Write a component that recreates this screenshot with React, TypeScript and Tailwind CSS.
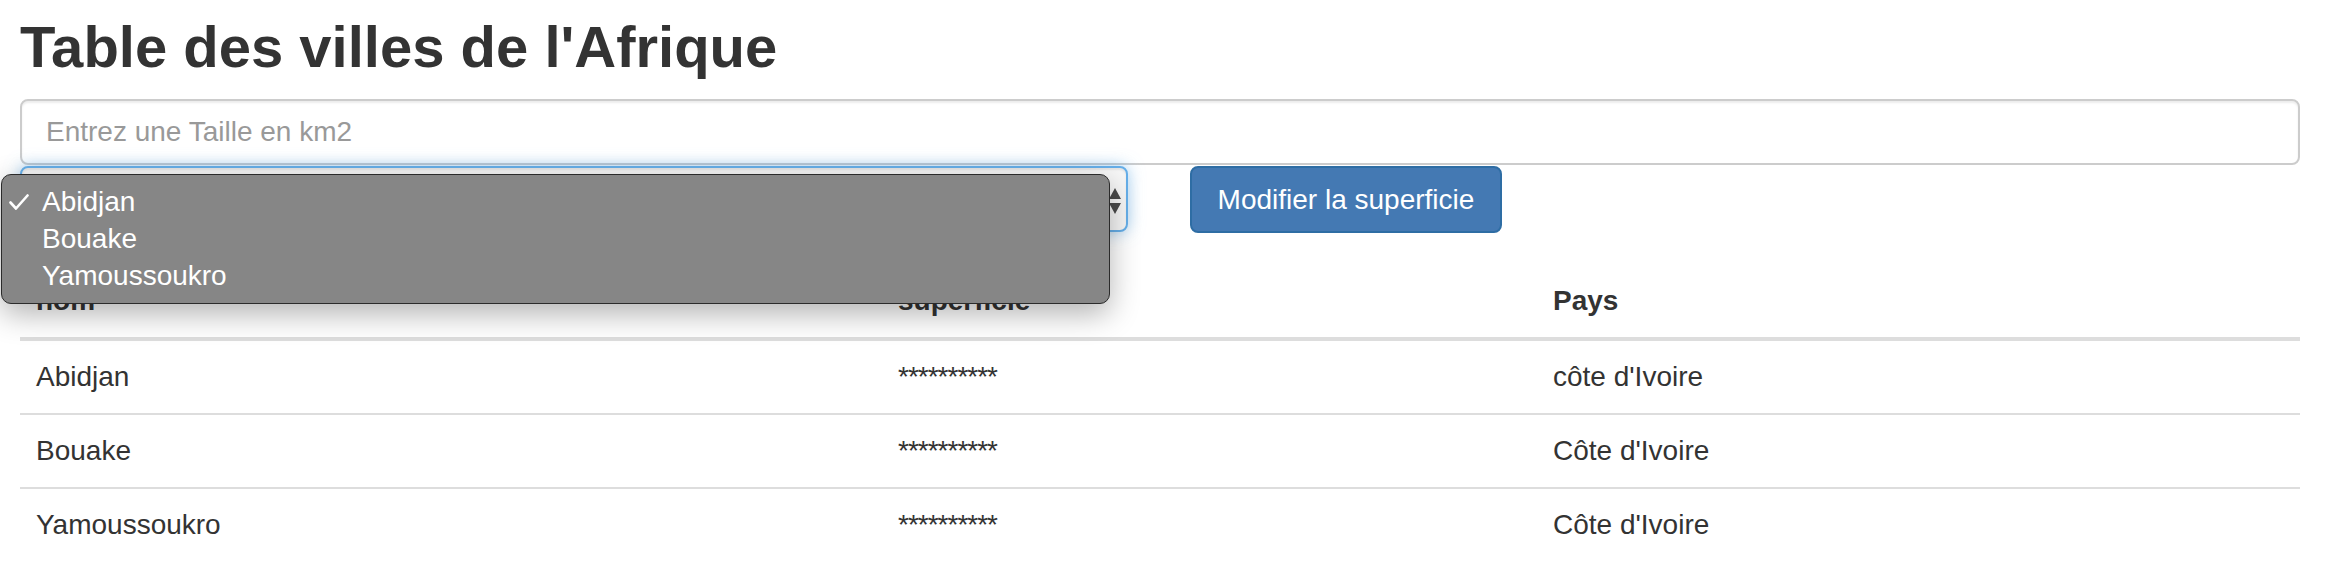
import React from "react";

const villes = [
  { nom: "Abidjan", superficie: "**********", pays: "côte d'Ivoire" },
  { nom: "Bouake", superficie: "**********", pays: "Côte d'Ivoire" },
  { nom: "Yamoussoukro", superficie: "**********", pays: "Côte d'Ivoire" },
];

const CheckMark = () => (
  <svg width="20" height="16" viewBox="0 0 20 16" className="absolute left-[7px] top-[19px]">
    <path d="M1.5 8.5 L7 14.5 L18.5 1.5" fill="none" stroke="white" strokeWidth="2.6" strokeLinecap="round" strokeLinejoin="round" />
  </svg>
);

const App = () => {
  return (
    <div className="min-h-[588px] bg-white px-[20px] pr-[40px] font-['Liberation_Sans',Arial,sans-serif] text-[#333]">
      <h1 className="mt-[18px] text-[58px] font-bold leading-[58px]">Table des villes de l'Afrique</h1>

      <input
        type="text"
        placeholder="Entrez une Taille en km2"
        className="mt-[23px] block h-[66px] w-full rounded-[8px] border-2 border-[#ccc] bg-white px-[24px] text-[28px] shadow-[inset_0_2px_2px_rgba(0,0,0,0.075)] outline-none placeholder:text-[#999]"
      />

      {/* select + bouton, avec le menu natif ouvert par-dessus */}
      <div className="relative mt-[1px] flex items-start">
        <div className="relative h-[66px] w-[1108px] rounded-[8px] border-2 border-[#66afe9] bg-[#f7f7f7] shadow-[inset_0_2px_2px_rgba(0,0,0,0.075),0_0_16px_rgba(102,175,233,0.6)]">
          <svg width="14" height="28" viewBox="0 0 14 28" className="absolute right-[4px] top-[19px]">
            <path d="M1 12 L7 1 L13 12 Z" fill="#4a4a4a" />
            <path d="M1 16 L7 27 L13 16 Z" fill="#4a4a4a" />
          </svg>
        </div>
        <button className="ml-[62px] h-[67px] w-[312px] rounded-[8px] border-2 border-[#2e6da4] bg-[#4479b3] text-[28px] text-white">
          Modifier la superficie
        </button>

        <div className="absolute left-[-19px] top-[8px] z-10 h-[130px] w-[1109px] rounded-[10px] border border-[#2b2b2b] bg-[#868686] pt-[8px] pl-[40px] text-[28px] leading-[37px] text-white shadow-[0_10px_30px_rgba(0,0,0,0.3)]">
          <CheckMark />
          <div>Abidjan</div>
          <div>Bouake</div>
          <div>Yamoussoukro</div>
        </div>
      </div>

      <table className="mt-[32px] w-full border-collapse text-left text-[28px] leading-[40px]">
        <thead>
          <tr className="border-b-4 border-[#ddd]">
            <th className="w-[862px] p-[16px] font-bold">nom</th>
            <th className="w-[655px] p-[16px] font-bold">superficie</th>
            <th className="p-[16px] font-bold">Pays</th>
          </tr>
        </thead>
        <tbody>
          {villes.map((v, i) => (
            <tr key={v.nom} className={i === 0 ? "" : "border-t-2 border-[#ddd]"}>
              <td className="p-[16px]">{v.nom}</td>
              <td className="p-[16px] tracking-[-1px]">{v.superficie}</td>
              <td className="p-[16px]">{v.pays}</td>
            </tr>
          ))}
        </tbody>
      </table>
    </div>
  );
};

export default App;
